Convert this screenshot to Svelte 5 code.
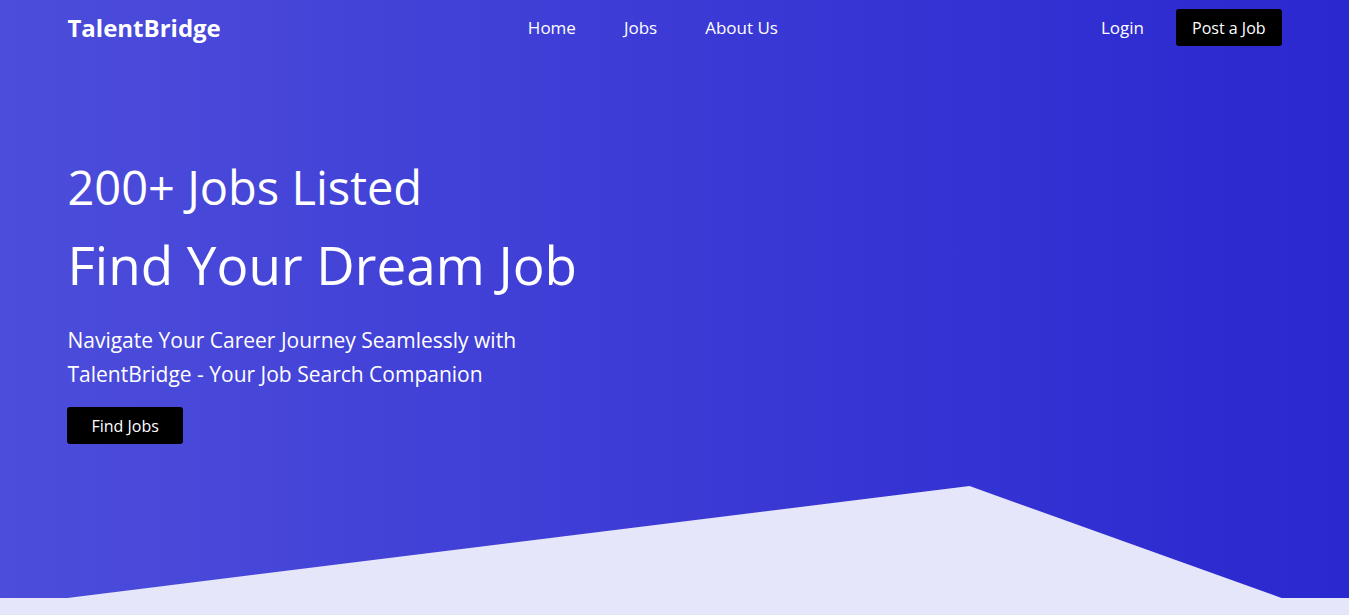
<script>
  const links = ['Home', 'Jobs', 'About Us'];
</script>

<div class="page">
  <header class="bar">
    <a class="brand" href="#home">TalentBridge</a>
    <nav class="links" aria-label="Main">
      {#each links as link}
        <a href="#{link.toLowerCase().replace(' ', '-')}">{link}</a>
      {/each}
    </nav>
    <div class="actions">
      <a href="#login">Login</a>
      <button class="button" type="button">Post a Job</button>
    </div>
  </header>

  <main class="hero">
    <p class="count">200+ Jobs Listed</p>
    <h1>Find Your Dream Job</h1>
    <p class="lead">Navigate Your Career Journey Seamlessly with TalentBridge - Your Job Search Companion</p>
    <button class="button wide" type="button">Find Jobs</button>
  </main>

  <div class="peak" aria-hidden="true"></div>
</div>

<style>
  :global(body) {
    margin: 0;
    background: #e5e6fa;
  }

  .page {
    box-sizing: border-box;
    padding: 0 5%;
    background: linear-gradient(to right, #4d4ddb, #2a28cf);
    color: #fff;
    font-family: 'Open Sans', 'Noto Sans', sans-serif;
  }

  a {
    color: inherit;
    text-decoration: none;
  }

  .bar {
    display: flex;
    align-items: center;
    justify-content: space-between;
    height: 55px;
    font-size: 17px;
  }

  .brand {
    font-size: 24px;
    font-weight: 700;
  }

  .links {
    display: flex;
    gap: 48px;
    padding-right: 16px;
  }

  .actions {
    display: flex;
    align-items: center;
    gap: 32px;
  }

  .button {
    height: 37px;
    padding: 0 16px;
    border: 0;
    border-radius: 3px;
    background: #000;
    color: #fff;
    font: inherit;
    font-size: 16px;
    cursor: pointer;
  }

  .wide {
    padding: 0 24px;
  }

  .hero {
    padding-top: 96px;
  }

  .count,
  h1,
  .lead {
    margin: 0;
    font-weight: 400;
  }

  .count {
    font-size: 47px;
    line-height: 72px;
  }

  h1 {
    font-size: 53px;
    line-height: 84px;
  }

  .lead {
    max-width: 480px;
    margin: 16px 0;
    font-size: 21px;
    line-height: 34px;
  }

  .peak {
    height: 112px;
    margin-top: 42px;
    background: #e5e6fa;
    clip-path: polygon(0 100%, 74.3% 0, 100% 100%);
  }
</style>
